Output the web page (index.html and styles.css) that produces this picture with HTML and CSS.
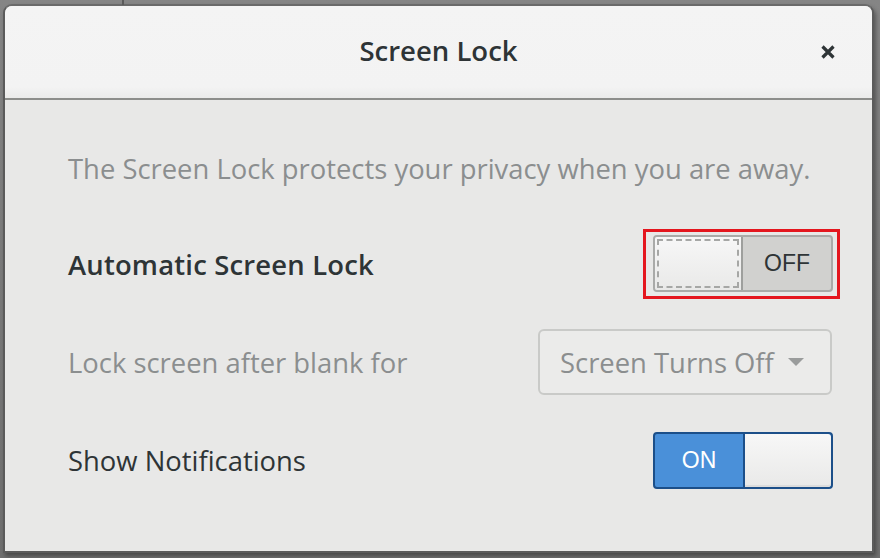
FILE: index.html
```html
<!DOCTYPE html>
<html>
<head>
<meta charset="utf-8">
<link rel="stylesheet" href="styles.css">
</head>
<body>
<div class="desktop">
  <div class="topline"></div>
  <div class="dialog">
    <div class="header">
      <div class="title">Screen Lock</div>
      <div class="close">
        <svg width="16" height="16" viewBox="0 0 16 16"><path d="M2.5 2.5 L13.5 13.5 M13.5 2.5 L2.5 13.5" stroke="#2e3436" stroke-width="3.2" stroke-linecap="butt"/></svg>
      </div>
    </div>
    <div class="content">
      <p class="desc">The Screen Lock protects your privacy when you are away.</p>
      <div class="row">
        <span class="label strong">Automatic Screen Lock</span>
        <div class="focus-ring">
          <div class="switch off">
            <div class="handle"><div class="dash"></div></div>
            <div class="state">OFF</div>
          </div>
        </div>
      </div>
      <div class="row">
        <span class="label dim">Lock screen after blank for</span>
        <div class="combo">
          <span>Screen Turns Off</span>
          <svg width="16" height="10" viewBox="0 0 16 10"><path d="M0 1 L16 1 L8 9 Z" fill="#9a9c9c"/></svg>
        </div>
      </div>
      <div class="row">
        <span class="label">Show Notifications</span>
        <div class="switch on">
          <div class="state">ON</div>
          <div class="handle"></div>
        </div>
      </div>
    </div>
  </div>
</div>
</body>
</html>
```
FILE: styles.css
```css
html, body {
  margin: 0;
  padding: 0;
}
body {
  width: 880px;
  height: 558px;
  overflow: hidden;
  background: #7a7a7a;
  font-family: "Open Sans", "Noto Sans", sans-serif;
}
.desktop {
  position: relative;
  width: 880px;
  height: 558px;
  background: linear-gradient(#858585, #6f6f6f);
  padding: 4px 0 0 3px;
  box-sizing: border-box;
}
.topline {
  position: absolute;
  left: 122px;
  top: 0;
  width: 2px;
  height: 5px;
  background: #5a5a5a;
}
.dialog {
  width: 871px;
  height: 549px;
  box-sizing: border-box;
  border: 2px solid #5b5b5b;
  border-top-color: #6a6a6a;
  border-radius: 9px 9px 0 0;
  background: #e8e8e7;
  display: flex;
  flex-direction: column;
  box-shadow: 2px 3px 4px rgba(0,0,0,0.35);
  overflow: hidden;
}
.header {
  height: 94px;
  flex: none;
  box-sizing: border-box;
  background: linear-gradient(#f4f4f4 0, #f3f3f3 88%, #ebebea 100%);
  border-bottom: 2px solid #8d8e8b;
  display: flex;
  align-items: center;
  justify-content: center;
  position: relative;
}
.title {
  font-size: 27.5px;
  color: #2e3436;
  font-weight: 600;
  margin-top: -4px;
}
.close {
  position: absolute;
  right: 36px;
  top: 38px;
  width: 16px;
  height: 16px;
}
.close svg { display: block; }
.content {
  padding: 44px 40px 0 63px;
  display: flex;
  flex-direction: column;
}
.desc {
  margin: 0;
  font-size: 27.4px;
  color: #8b8e8f;
  line-height: 50px;
}
.row {
  display: flex;
  align-items: center;
  justify-content: space-between;
  height: 98px;
}
.row:first-of-type { margin-top: 21px; }
.label {
  font-size: 27.4px;
  color: #2e3436;
}
.label.strong { font-weight: 600; letter-spacing: 0.2px; }
.label.dim { color: #8b8e8f; }
.focus-ring {
  border: 3px solid #e4161e;
  padding: 3px 4px 4px 7px;
  margin-right: -8px;
}
.switch {
  width: 180px;
  height: 57px;
  box-sizing: border-box;
  border-radius: 4px;
  display: flex;
  overflow: hidden;
}
.switch.off {
  border: 2px solid #a9aaa8;
  background: #d1d1cf;
}
.switch.on {
  border: 2px solid #1c4f89;
  background: #4a90d9;
  margin-right: -1px;
}
.handle {
  width: 88px;
  flex: none;
  box-sizing: border-box;
  background: linear-gradient(#f7f7f7, #e9e9e8);
  position: relative;
}
.switch.off .handle {
  border-right: 2px solid #9e9f9d;
}
.switch.on .handle {
  border-left: 2px solid #1c4f89;
  border-radius: 0 3px 3px 0;
  box-shadow: 0 -2px 0 #dcdcdc inset;
}
.dash {
  position: absolute;
  inset: 2px;
  border: 2px dashed #a6a7a5;
}
.state {
  flex: 1;
  display: flex;
  align-items: center;
  justify-content: center;
  font-family: "Liberation Sans", Arial, sans-serif;
  font-size: 23px;
}
.switch.off .state { color: #2e3436; }
.switch.on .state { color: #ffffff; }
.combo {
  width: 294px;
  height: 66px;
  box-sizing: border-box;
  border: 2px solid #c9cac8;
  border-radius: 6px;
  background: #ebebea;
  display: flex;
  align-items: center;
  justify-content: space-between;
  padding: 0 26px 0 20px;
  font-size: 27.4px;
  color: #8b8e8f;
}
```
